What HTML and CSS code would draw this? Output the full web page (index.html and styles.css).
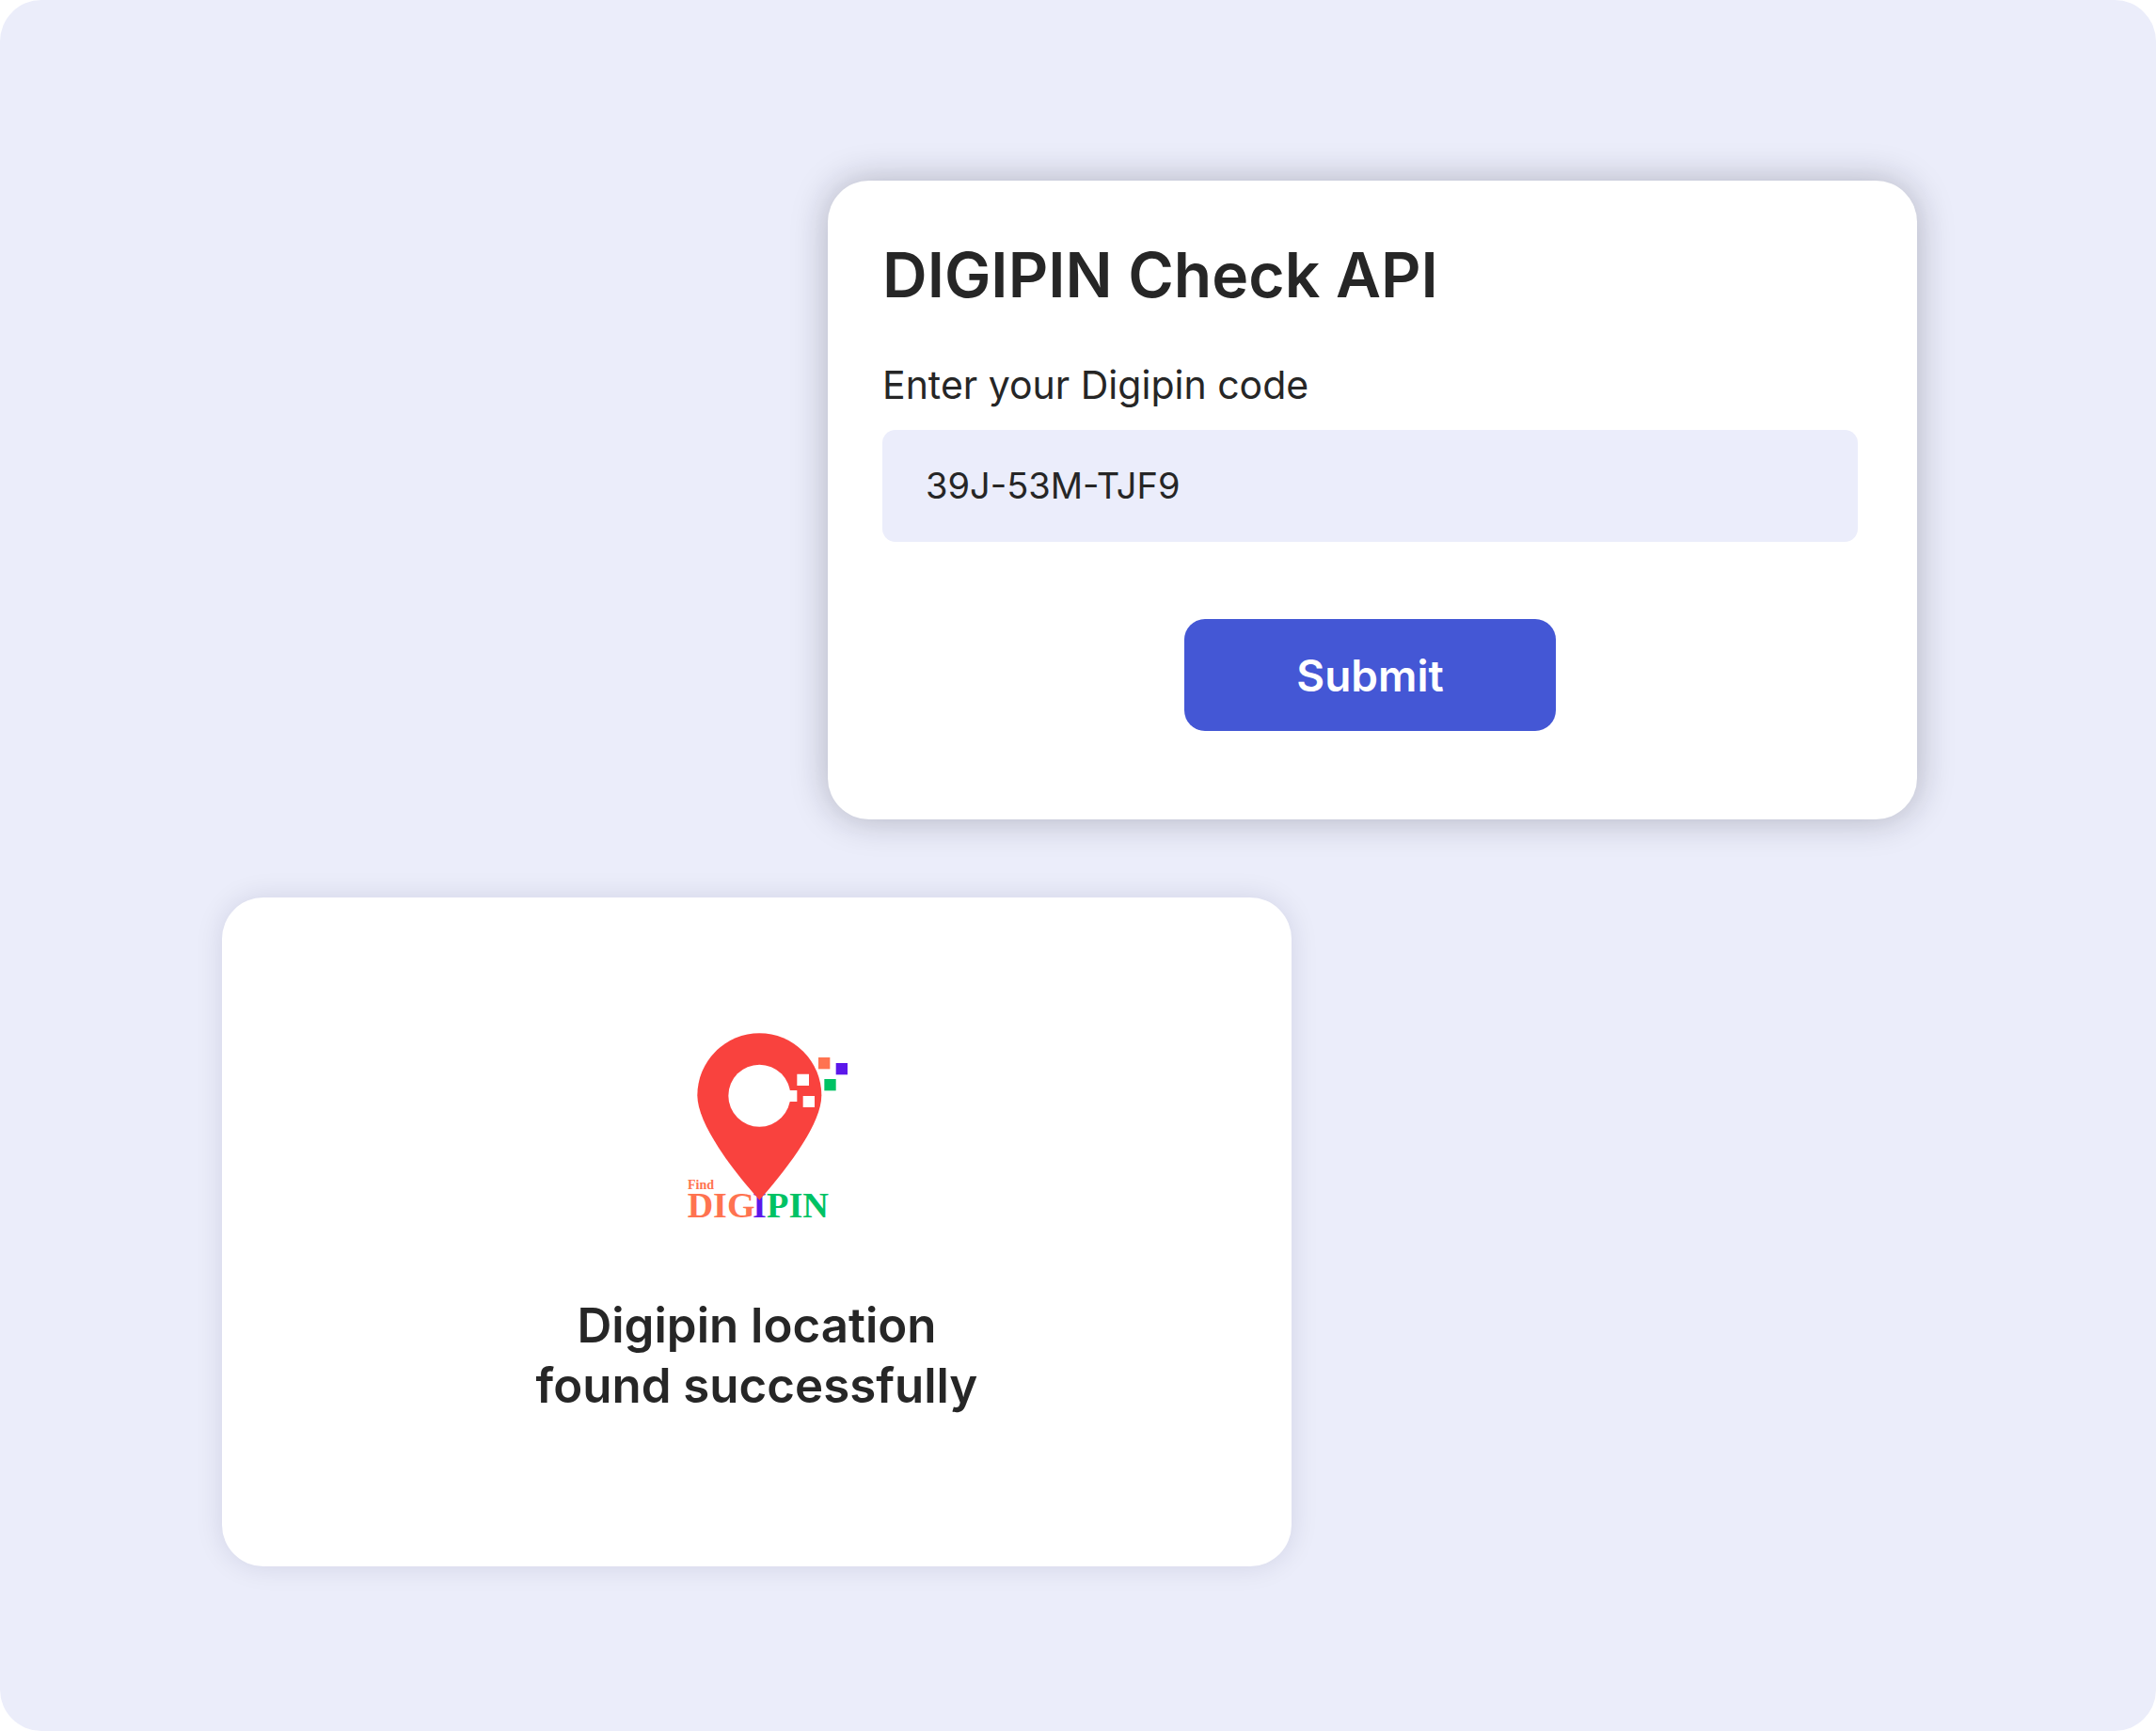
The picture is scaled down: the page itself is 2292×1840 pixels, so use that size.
FILE: index.html
```html
<!DOCTYPE html>
<html lang="en">

<head>
  <meta charset="UTF-8">
  <meta name="viewport" content="width=device-width, initial-scale=1.0">
  <title>DIGIPIN Check API</title>
  <link rel="stylesheet" href="styles.css">
</head>

<body>
  <main class="stage">
    <form class="card check-card">
      <h1>DIGIPIN Check API</h1>
      <label for="digipin">Enter your Digipin code</label>
      <input type="text" id="digipin" name="digipin" value="39J-53M-TJF9">
      <button type="submit">Submit</button>
    </form>

    <section class="card result-card">
      <svg class="logo" viewBox="21 78 585 624" role="img" aria-label="Find DIGIPIN">
        <!-- wordmark -->
        <g class="wordmark">
          <text x="93" y="579" font-size="42" fill="#ff7350">Find</text>
          <text x="92" y="669" font-size="114" fill="#ff7350">DIG</text>
          <text x="300" y="669" font-size="114" fill="#5b17ea">I</text>
          <text x="345" y="669" font-size="115" fill="#00c264">PIN</text>
        </g>
        <!-- pin -->
        <path fill="#f9423e" d="M322 614C230 510 124 370 124 280A198 198 0 0 1 520 280C520 370 414 510 322 614Z" />
        <circle cx="322" cy="281" r="99" fill="#fff" />
        <!-- pixels -->
        <path fill="#fff" d="M410 264h32v36h-32zM442 212h38v37h-38zM461 282h37v36h-37z" />
        <path fill="#ff7350" d="M510 159h37v37h-37z" />
        <path fill="#5b17ea" d="M566 177h37v37h-37z" />
        <path fill="#00c264" d="M529 228h37v37h-37z" />
      </svg>
      <p>Digipin location<br>found successfully</p>
    </section>
  </main>
</body>

</html>
```
FILE: styles.css
```css
* {
  box-sizing: border-box;
}

body {
  margin: 0;
  background-color: #fff;
  color: #262626;
  font-family: Inter, "Open Sans", sans-serif;
}

.stage {
  display: grid;
  grid-template-columns: 644fr 493fr 665fr;
  align-content: start;
  row-gap: 83px;
  min-height: 100vh;
  padding: 192px 254px 160px 236px;
  background-color: #ebedfa;
  border-radius: 44px;
}

.card {
  display: flex;
  flex-direction: column;
  background-color: #fff;
  border-radius: 44px;
}

.check-card {
  grid-column: 2 / 4;
  padding: 60px 63px 94px 58px;
  box-shadow: 0 0 38px rgba(20, 20, 40, 0.28);
}

.result-card {
  grid-column: 1 / 3;
  align-items: center;
  padding: 143px 40px 160px;
  box-shadow: 0 0 30px rgba(20, 20, 60, 0.11);
}

h1 {
  margin: 0 0 51px;
  font-size: 66px;
  font-weight: 600;
  line-height: 80px;
}

label {
  margin-bottom: 22px;
  font-size: 41px;
  line-height: 52px;
}

input {
  width: 100%;
  height: 119px;
  padding: 0 46px 2px;
  border: none;
  border-radius: 14px;
  background-color: #ebedfb;
  color: #262626;
  font-family: inherit;
  font-size: 38px;
}

button {
  align-self: center;
  width: 395px;
  height: 119px;
  margin-top: 82px;
  border: none;
  border-radius: 22px;
  background-color: #4457d5;
  color: #fff;
  font-family: inherit;
  font-size: 46px;
  font-weight: 600;
  cursor: pointer;
}

button:hover {
  background-color: #3547bd;
}

.logo {
  width: 195px;
  height: 208px;
}

.wordmark {
  font-family: "Liberation Serif", serif;
  font-weight: 700;
}

.result-card p {
  margin: 72px 0 0;
  font-size: 51px;
  font-weight: 600;
  line-height: 64px;
  text-align: center;
}
```
